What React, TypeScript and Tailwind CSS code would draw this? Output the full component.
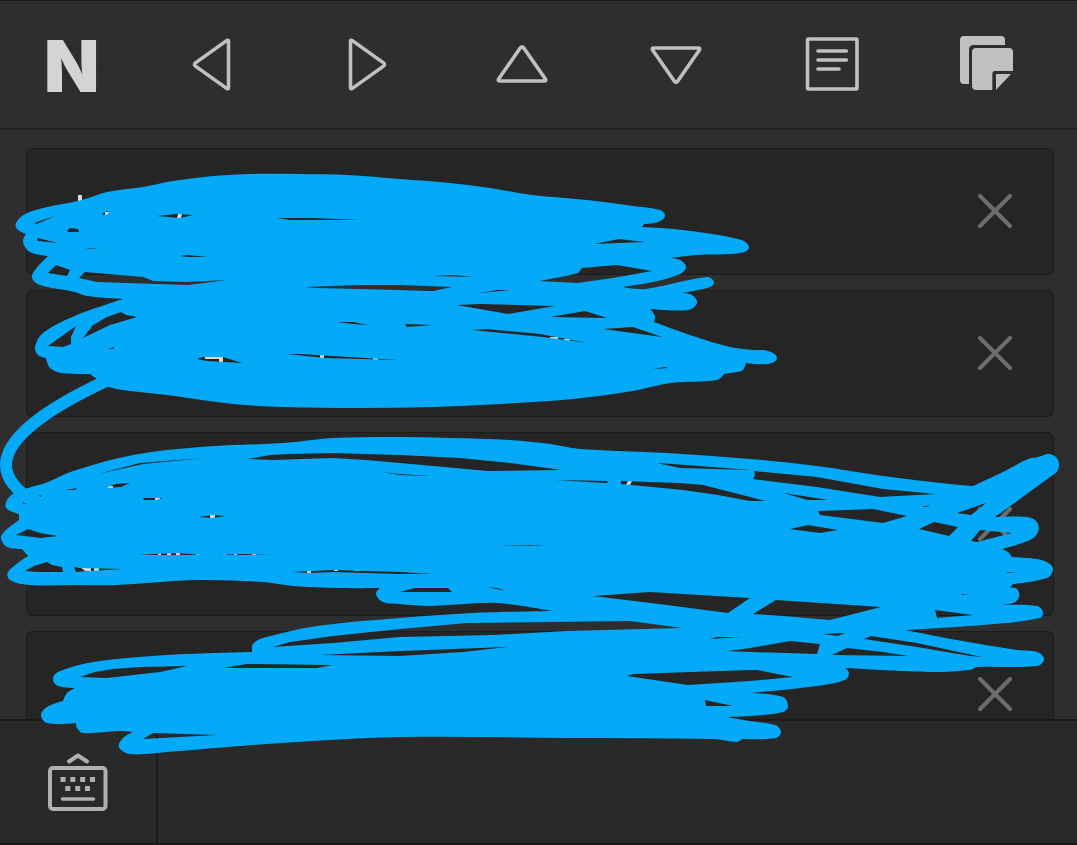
import React from "react";

type Point = [number, number];

const parse = (s: string): Point[] =>
  s.trim().split(/\s+/).map((p) => p.split(",").map(Number) as Point);

/** Closed outline: rounded on outward bends, sharp where two strokes meet. */
function outline(s: string): string {
  const pts = parse(s);
  const n = pts.length;
  const tangents = pts.map((p, i): Point => {
    const a = pts[(i + n - 1) % n];
    const b = pts[(i + 1) % n];
    const ux = p[0] - a[0], uy = p[1] - a[1];
    const vx = b[0] - p[0], vy = b[1] - p[1];
    const turn = Math.atan2(ux * vy - uy * vx, ux * vx + uy * vy);
    if (turn < -0.45 || turn > 2) return [0, 0];
    // the longer neighbour sets the direction, so straight runs stay straight
    const tx = ux + vx;
    const ty = uy + vy;
    const l = Math.hypot(tx, ty) || 1;
    return [tx / l, ty / l];
  });
  let d = `M${pts[0][0]} ${pts[0][1]}`;
  for (let i = 0; i < n; i++) {
    const j = (i + 1) % n;
    const p = pts[i], q = pts[j];
    const l = Math.hypot(q[0] - p[0], q[1] - p[1]) / 3;
    const c1 = [p[0] + tangents[i][0] * l, p[1] + tangents[i][1] * l];
    const c2 = [q[0] - tangents[j][0] * l, q[1] - tangents[j][1] * l];
    d += `C${c1[0].toFixed(1)} ${c1[1].toFixed(1)} ${c2[0].toFixed(1)} ${c2[1].toFixed(1)} ${q[0]} ${q[1]}`;
  }
  return d + "Z";
}

const polygon = (s: string) => "M" + s.trim().split(/\s+/).join("L") + "Z";

const UPPER = `16,223 25,214 43,208 82,200 107,192 143,187 173,181 213,176 250,174 300,174 347,175 400,179 450,183 490,188 532,195
587,200 633,206 660,210 665,216 658,222 644,224 642,227 683,230 738,239 749,247 740,253 697,255 670,258 680,260 686,267 680,274
653,282 622,287 645,289 707,277 714,282 710,287 682,293 692,295 697,303 688,310 650,309 655,316 654,322 693,336 730,347 753,350
768,351 777,358 768,364 746,363 743,370 737,372 724,374 717,380 670,383 633,391 573,399 500,404 433,407 360,408 283,407 233,404
167,395 130,391 109,387 97,379 90,374 62,373 50,368 46,358 38,355 35,347 43,333 77,315 123,299 87,296 75,292 40,285 32,278
35,270 48,256 30,252 23,242 26,234 17,229`;

const LOWER = `28,488 48,482 73,471 133,455 200,447 283,443 333,438 400,437 450,438 510,440 550,444 580,449 667,453 750,459
817,466 883,476 950,484 973,486 1003,472 1028,459 1038,457 1050,454 1058,460 1058,470 1050,477 995,517 1027,517 1037,522
1038,532 1030,540 1002,549 1008,552 1012,557 1037,559 1050,564 1053,570 1047,578 1013,584 1010,588 1017,589 1019,597 1013,603
993,605 1037,606 1043,612 1040,618 983,625 905,630 957,640 1017,650 1037,652 1044,659 1037,666 977,667 970,670 930,672 845,668
849,673 845,680 817,686 750,693 783,697 788,706 783,712 750,716 727,717 750,721 775,725 781,732 776,738 742,739 737,742 713,739
567,738 400,737 267,744 167,752 130,754 119,747 123,738 133,732 118,731 83,733 77,728 76,723 47,723 41,715 47,707 63,701
67,693 75,688 58,686 53,679 58,672 93,662 167,655 252,652 253,644 263,638 317,626 400,618 473,613 552,611 497,603 430,606
400,604 383,602 376,594 380,588 340,588 293,586 263,582 197,580 117,585 77,585 30,585 10,580 8,572 28,556 22,549 7,547 1,538 5,531
19,520 19,514 7,509 6,502 14,493`;

const UPPER_GAPS = [
  "34,223 55,216 37,224", "67,231 70,228 78,229 79,232 68,232", "37,238 58,243 38,241", "102,214 107,211 109,213 106,215",
  "157,216 177,214 193,215 180,218", "277,218 313,218 360,220 290,220", "180,256 187,255 208,257 188,257", "86,248 99,249 90,249",
  "48,273 56,265 70,270 67,276", "79,278 85,272 143,277 153,281 187,282 227,280 188,285 97,282",
  "48,346 76,326 71,337 71,344 63,347", "83,338 93,325 107,317 121,312 126,315 137,317 110,325", "108,349 115,347 113,349",
  "197,359 202,357 223,357 242,363 207,361", "337,322 353,322 368,325 353,324", "287,354 300,354 398,360 325,358",
  "305,287 360,285 400,285 452,287 433,291 400,290 317,288", "539,281 566,276 578,273 582,268 617,265 652,271 613,278 578,283",
  "594,244 619,239 645,242", "457,305 480,304 555,306 508,314", "550,317 585,311 607,318", "603,329 633,327 662,337",
  "472,330 487,329 540,334 588,343 543,337", "480,293 497,290 510,290", "405,324 432,325 407,327", "653,369 665,367 668,368",
  "433,276 453,275 473,277",
];

const LOWER_GAPS = [
  "248,459 270,455 290,454 333,453 400,455 460,458 510,463 562,470 488,471 400,463 366,460 333,458 273,460", "98,474 140,463 205,458 143,464",
  "106,488 115,484 130,483 121,487", "66,490 77,488 75,490", "143,498 163,498 156,500 144,500", "199,517 212,515 225,516 212,518",
  "16,535 28,529 40,533 58,536 41,538", "25,571 34,566 47,562 52,565 62,567 63,572 37,572", "74,567 80,568 123,569 90,571 76,572",
  "137,555 177,553 202,555 177,555", "217,555 243,554 270,555 243,555",
  "292,572 333,570 400,572 432,574 400,574 333,572 310,573",
  "273,647 290,642 333,636 400,629 467,623 550,622 630,621 682,628 567,631 493,635 400,637 333,643",
  "320,655 400,651 507,647 463,652 400,656", "80,677 95,672 113,669 140,667 187,666 160,672 107,678", "223,668 247,664 333,665 317,668",
  "555,480 608,481 607,483", "621,481 680,483 703,485 750,497 765,501 750,501 718,495 683,490 621,484", "657,463 672,464 700,466 750,470 680,468",
  "400,592 415,588 448,588 452,592", "487,587 497,588 506,591", "593,596 650,592 750,598 728,613 667,605",
  "498,546 545,545 530,546", "382,472 400,474 430,476 400,475", "710,639 717,637 740,637", "728,651 750,648 790,641 820,644 817,654 750,652",
  "627,676 633,674 750,670 757,670 793,677 750,681 688,685", "705,700 733,706 706,706",
  "754,471 755,475 753,479 817,487 880,497 936,494 883,489 817,477", "783,493 803,496 828,500 808,500", "818,511 873,509 907,516 883,523 820,515",
  "790,529 808,525 838,530 820,533", "919,529 934,522 958,527 949,536", "957,513 986,503 971,515", "921,507 931,505 926,507",
  "971,541 980,530 1012,533 977,542", "1006,572 1016,573 1008,573", "753,614 776,600 881,607 830,620 783,616",
  "935,610 973,615 937,618", "822,634 845,633 838,636", "832,655 847,648 883,652 908,656",
  "864,639 871,636 917,643 982,657 970,656 917,647", "961,594 968,595 962,595", "143,739 153,733 217,735", "22,502 28,504 24,504", "39,495 42,496 40,497",
];

const UPPER_PATH = outline(UPPER) + UPPER_GAPS.map(polygon).join("");
const LOWER_PATH = outline(LOWER) + LOWER_GAPS.map(polygon).join("");

function Scribble() {
  return (
    <svg viewBox="0 0 1077 845" aria-hidden="true" className="pointer-events-none absolute inset-0 h-full w-full">
      <g fill="#d8d8d8">
        <path d="M78 195h4v6h-4zM105 212h4v3h-4zM178 214h4l-1 4h-4zM205 357h18v5h-4v-3h-14zM320 354h4v4h-4zM373 357h5v4h-5z" />
        <path d="M550 337h8v3h-8zM564 339h6v3h-6zM628 481h4l-2 4h-4zM107 486h6v3h-6zM155 497h5v3h-5zM210 515h5v3h-5z" />
        <path d="M80 567h11v4h-6zM94 567h5v4h-5zM158 553h3v3h-3zM167 553h4v3h-4zM176 553h4v3h-4zM196 553h4v3h-4zM307 570h4v4h-4zM334 569h4v2h-4zM355 569h6v2h-6zM223 553h3v3h-3zM234 553h3v3h-3zM252 553h4v3h-4z" />
      </g>
      <g fill="#04a9f8" fillRule="evenodd">
        <path d={UPPER_PATH} />
        <path d={LOWER_PATH} />
      </g>
      <path d="M106 381C50 407 6 437 6 465C6 480 18 490 30 500" fill="none" stroke="#04a9f8" strokeWidth="12" />
    </svg>
  );
}

const glyphs: { label: string; art: React.ReactNode }[] = [
  { label: "Previous", art: <path d="M45 6.4L13.8 28.6q-2.6 1.9 0 3.8L45 54.6q1.5.6 1.5-1V7.4q0-1.6-1.5-1Z" /> },
  { label: "Next", art: <path d="M15 6.4L46.2 28.6q2.6 1.9 0 3.8L15 54.6q-1.5.6-1.5-1V7.4q0-1.6 1.5-1Z" /> },
  { label: "Up", art: <path d="M28.4 13.8L6.6 45q-1 2 1.2 2h44.4q2.2 0 1.2-2L31.6 13.8q-1.6-2.2-3.2 0Z" /> },
  { label: "Down", art: <path d="M28.4 47.2L6.6 16q-1-2 1.2-2h44.4q2.2 0 1.2 2L31.6 47.2q-1.6 2.2-3.2 0Z" /> },
  {
    label: "Article",
    art: (
      <>
        <rect x="6.5" y="5" width="49.5" height="50" rx="1" />
        <path d="M17 17h28.5M17 26h28.5M17 35h21" strokeLinecap="round" />
      </>
    ),
  },
  {
    label: "Clippings",
    art: (
      <g fill="#c0c0c0" stroke="none">
        <path d="M8 2h37q4 0 4 4v5H18q-5 0-5 5v34H8q-4 0-4-4V6q0-4 4-4Z" />
        <path d="M20 14h33q4 0 4 4v19H39q-2.7 0-2.7 3v16H20q-4 0-4-4V18q0-4 4-4Z" />
        <path d="M40 40h15L40 56Z" />
      </g>
    ),
  },
];

const cards = [
  { id: 1, height: "h-[127px]" },
  { id: 2, height: "h-[127px]" },
  { id: 3, height: "h-[184px]" },
  { id: 4, height: "h-[127px]" },
];

export default function App() {
  return (
    <div className="relative flex h-screen flex-col overflow-hidden bg-[#2e2e2e] font-['Inter',sans-serif]">
      <header className="flex h-[130px] shrink-0 items-center border-t border-b-2 border-t-[#1a1a1a] border-b-[#232323] pr-3.5 pl-11">
        <button aria-label="Home" className="w-[91px] pt-0.5 text-left text-[72px] leading-none font-black text-[#d4d4d4]">
          N
        </button>
        {glyphs.map((g) => (
          <button key={g.label} aria-label={g.label} className="flex flex-1 justify-center">
            <svg width="60" height="61" viewBox="0 0 60 61" fill="none" stroke="#c0c0c0" strokeWidth="3.6" strokeLinejoin="round">
              {g.art}
            </svg>
          </button>
        ))}
      </header>

      <main className="min-h-0 flex-1 overflow-hidden pt-[18px] pr-[23px] pl-[26px]">
        <ul className="flex flex-col gap-[15px]">
          {cards.map((c) => (
            <li key={c.id} className={`flex shrink-0 items-center justify-end rounded-md border border-[#1c1c1c] bg-[#252525] pr-7 ${c.height}`}>
              <button aria-label="Remove" className="flex w-[60px] justify-center">
                <svg width="36" height="35" viewBox="0 0 36 35" stroke="#6d6d6d" strokeWidth="4" strokeLinecap="round">
                  <path d="M3 2l30 30M33 2L3 32" />
                </svg>
              </button>
            </li>
          ))}
        </ul>
      </main>

      <footer className="flex h-[126px] shrink-0 border-y-2 border-[#1a1a1a] bg-[#292929]">
        <button aria-label="Show keyboard" className="flex w-[158px] items-center justify-center border-r-2 border-[#1a1a1a]">
          <svg width="60" height="60" viewBox="0 0 60 60" fill="none" stroke="#b0b0b0" strokeWidth="4" strokeLinecap="round" strokeLinejoin="round">
            <path d="M21 9.5L30 3.5l9 6" />
            <rect x="2" y="16" width="55.5" height="41" rx="3" />
            <path d="M14.5 47h31" strokeWidth="3.4" />
            <path d="M12.5 25h5v5h-5zM22.3 25h5v5h-5zM32.2 25h5v5h-5zM42 25h5v5h-5zM17.3 34h5v5h-5zM27.2 34h5v5h-5zM37 34h5v5h-5z" fill="#b0b0b0" stroke="none" />
          </svg>
        </button>
        <input aria-label="Text" className="min-w-0 flex-1 bg-transparent px-6 text-3xl text-[#d4d4d4] outline-none" />
      </footer>

      <Scribble />
    </div>
  );
}
